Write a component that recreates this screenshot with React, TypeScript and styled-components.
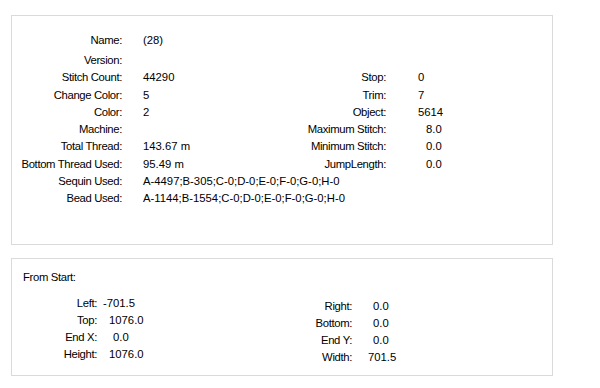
import React from 'react';
import styled, { createGlobalStyle } from 'styled-components';

const Global = createGlobalStyle`
  html, body { margin: 0; padding: 0; background: #ffffff; }
  body {
    font-family: "Liberation Sans", Arial, sans-serif;
    font-size: 11.3px;
    color: #000000;
  }
`;

const Page = styled.div`
  width: 600px;
  height: 388px;
  box-sizing: border-box;
  padding: 15px 0 0 11px;
  display: flex;
  flex-direction: column;
  gap: 13px;
`;

const Panel = styled.div<{ $h: number; $pt: number }>`
  width: 542px;
  height: ${(p) => p.$h}px;
  box-sizing: border-box;
  border: 1px solid #dadada;
  padding-top: ${(p) => p.$pt}px;
  display: flex;
  flex-direction: column;
`;

const Row = styled.div<{ $h?: number; $mb?: number }>`
  display: flex;
  align-items: center;
  height: ${(p) => p.$h ?? 17.3}px;
  margin-bottom: ${(p) => p.$mb ?? 0}px;
  white-space: nowrap;
`;

const Label = styled.span<{ $w: number }>`
  width: ${(p) => p.$w}px;
  flex: none;
  text-align: right;
  letter-spacing: -0.35px;
`;

const Value = styled.span<{ $ml: number; $w?: number }>`
  margin-left: ${(p) => p.$ml}px;
  width: ${(p) => (p.$w ? `${p.$w}px` : 'auto')};
  flex: none;
`;

const Header = styled.div`
  height: 17px;
  display: flex;
  align-items: center;
  padding-left: 11px;
  margin-bottom: 10px;
  letter-spacing: -0.35px;
`;

const Columns = styled.div`
  display: flex;
`;

const Column = styled.div<{ $w?: number; $mt?: number }>`
  width: ${(p) => (p.$w ? `${p.$w}px` : 'auto')};
  margin-top: ${(p) => p.$mt ?? 0}px;
  display: flex;
  flex-direction: column;
`;

type Pair = [string, string, number?];

const topRows: { l: string; v: string; l2?: string; v2?: string; i2?: number; wide?: boolean }[] = [
  { l: 'Stitch Count:', v: '44290', l2: 'Stop:', v2: '0' },
  { l: 'Change Color:', v: '5', l2: 'Trim:', v2: '7' },
  { l: 'Color:', v: '2', l2: 'Object:', v2: '5614' },
  { l: 'Machine:', v: '', l2: 'Maximum Stitch:', v2: '8.0', i2: 8 },
  { l: 'Total Thread:', v: '143.67 m', l2: 'Minimum Stitch:', v2: '0.0', i2: 8 },
  { l: 'Bottom Thread Used:', v: '95.49 m', l2: 'JumpLength:', v2: '0.0', i2: 8 },
  { l: 'Sequin Used:', v: 'A-4497;B-305;C-0;D-0;E-0;F-0;G-0;H-0', wide: true },
  { l: 'Bead Used:', v: 'A-1144;B-1554;C-0;D-0;E-0;F-0;G-0;H-0', wide: true },
];

const leftBox: Pair[] = [
  ['Left:', '-701.5', 0],
  ['Top:', '1076.0', 6],
  ['End X:', '0.0', 10],
  ['Height:', '1076.0', 6],
];

const rightBox: Pair[] = [
  ['Right:', '0.0', 5],
  ['Bottom:', '0.0', 5],
  ['End Y:', '0.0', 5],
  ['Width:', '701.5', 0],
];

export default function App() {
  return (
    <>
      <Global />
      <Page>
        <Panel $h={230} $pt={15}>
          <Row $mb={3}>
            <Label $w={110}>Name:</Label>
            <Value $ml={21}>(28)</Value>
          </Row>
          <Row>
            <Label $w={110}>Version:</Label>
          </Row>
          {topRows.map((r) => (
            <Row key={r.l}>
              <Label $w={110}>{r.l}</Label>
              <Value $ml={21} $w={r.wide ? undefined : 120}>{r.v}</Value>
              {r.l2 && <Label $w={123}>{r.l2}</Label>}
              {r.v2 && <Value $ml={32 + (r.i2 ?? 0)}>{r.v2}</Value>}
            </Row>
          ))}
        </Panel>
        <Panel $h={118} $pt={9}>
          <Header>From Start:</Header>
          <Columns>
            <Column $w={238}>
              {leftBox.map(([l, v, i]) => (
                <Row key={l} $h={16.8}>
                  <Label $w={85}>{l}</Label>
                  <Value $ml={6 + (i ?? 0)}>{v}</Value>
                </Row>
              ))}
            </Column>
            <Column $mt={3}>
              {rightBox.map(([l, v, i]) => (
                <Row key={l} $h={16.8}>
                  <Label $w={102}>{l}</Label>
                  <Value $ml={16 + (i ?? 0)}>{v}</Value>
                </Row>
              ))}
            </Column>
          </Columns>
        </Panel>
      </Page>
    </>
  );
}
